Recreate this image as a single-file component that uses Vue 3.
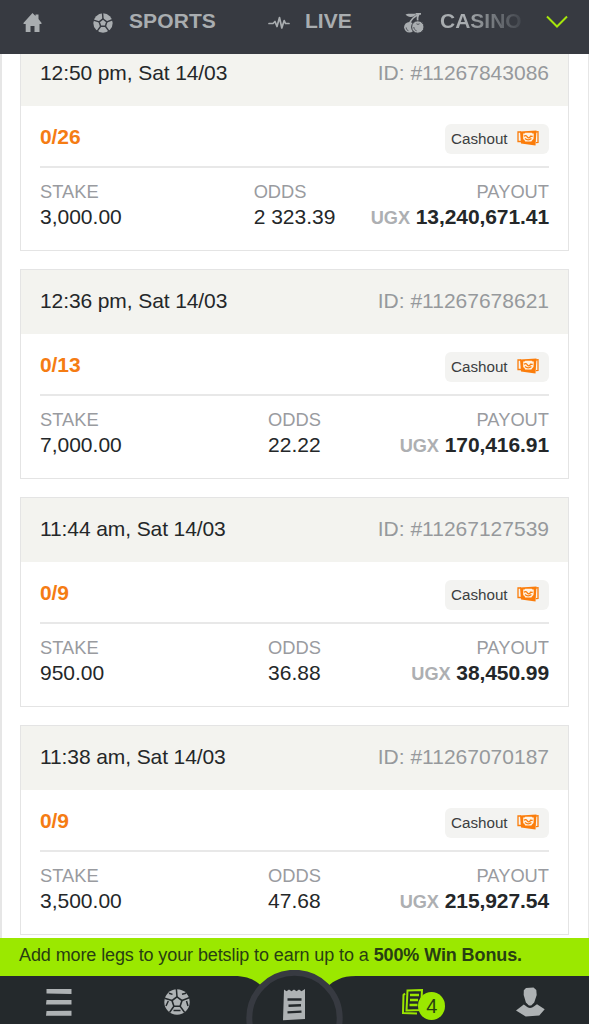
<script setup>
const bets = [
  { time: '12:50 pm, Sat 14/03', id: '11267843086', legs: '0/26', stake: '3,000.00', odds: '2 323.39', payout: '13,240,671.41' },
  { time: '12:36 pm, Sat 14/03', id: '11267678621', legs: '0/13', stake: '7,000.00', odds: '22.22', payout: '170,416.91' },
  { time: '11:44 am, Sat 14/03', id: '11267127539', legs: '0/9', stake: '950.00', odds: '36.88', payout: '38,450.99' },
  { time: '11:38 am, Sat 14/03', id: '11267070187', legs: '0/9', stake: '3,500.00', odds: '47.68', payout: '215,927.54' },
]
</script>

<template>
  <div class="screen">
    <header class="topbar">
      <svg class="home" width="19" height="20" viewBox="0 0 19 20"><path d="M9.5 0 12.5 3V1.5h3V6l3.3 4.2-.8.8h-1.5v8h-5v-6h-4v6H2.7v-8H1l-.8-.8Z" fill="#a9adb0" /></svg>
      <div class="tab sports">
        <svg width="20" height="20" viewBox="0 0 26 26">
          <circle cx="13" cy="13" r="12.6" fill="#a9adb0" />
          <path d="m13 7.8 5 3.7-1.9 5.8H9.9L8 11.5Z" fill="none" stroke="#373a41" stroke-width="1.9" />
          <path d="M13 7.8 12.4 0M18 11.5l7.2-2.7M16.1 17.3l4.6 6.2M9.9 17.3l-4.4 6.2M8 11.5.6 9.3" fill="none" stroke="#373a41" stroke-width="1.9" />
        </svg>
        <span>SPORTS</span>
      </div>
      <div class="tab live">
        <svg width="22" height="16" viewBox="0 0 22 16"><path d="M1 8.5h4l2-2 2 5 2.5-9 2.3 10.5 2.4-7.5 1.3 3H21" fill="none" stroke="#a9adb0" stroke-width="1.7" stroke-linecap="round" stroke-linejoin="round" /></svg>
        <span>LIVE</span>
      </div>
      <div class="tab casino">
        <svg width="20" height="22" viewBox="0 0 20 22">
          <path d="M1.5 2.6C4 .6 8 2.6 12.5 1.2 11 5.4 4.5 6.3 1.5 2.6ZM12 1h5v1.7h-5Z" fill="#a9adb0" />
          <path d="M15 2C10 5 7 7 5.5 12M15 2c-2 3-2 6-.5 9" fill="none" stroke="#a9adb0" stroke-width="1.7" />
          <circle cx="5.4" cy="15.2" r="5.3" fill="#a9adb0" />
          <circle cx="13.8" cy="15" r="6.2" fill="#a9adb0" stroke="#373a41" />
          <path d="M2.2 15.5c.2 2 1 2.8 2.2 3.2M9.8 15c.2 2 1.2 3.3 2.8 3.8M12.5 11.8c1 .7 2 .6 3 0" fill="none" stroke="#373a41" stroke-width=".8" />
        </svg>
        <span class="fade">CASINO</span>
      </div>
      <svg class="chevron" width="22" height="14" viewBox="0 0 22 14"><path d="m1 1.5 10 10 10-10" fill="none" stroke="#a6e60b" stroke-width="2" /></svg>
    </header>

    <main class="list">
      <article v-for="bet in bets" :key="bet.id" class="card">
        <div class="card-head"><span class="time">{{ bet.time }}</span><span class="id">ID: #{{ bet.id }}</span></div>
        <div class="card-body">
          <div class="status">
            <strong>{{ bet.legs }}</strong>
            <div class="cashout">
              <span>Cashout</span>
              <svg width="22" height="16" viewBox="0 0 22 16">
                <path d="M4 2H1v9.5h3M19 2l2-.3v10.8l-2 .2" fill="none" stroke="#fb7d0b" stroke-width="1.3" />
                <path d="M3 1.5 19.5.6l-1 14.8L4 13.6Z" fill="#fb7d0b" />
                <path d="M6.2 3.6h1.3l.8-.8h6.4l.9.7h1.2l-.3 5.6c-.8.3-1.2 1.7-2.2 2.3H8.2c-.4-1-1-1.8-2-2.2Z" fill="#fff3e3" />
                <path d="M7 6.3c1.4-1.2 2.4-.8 3.3.5s2.5 1.5 3.2-.6l2.2.2M8 8.6c1.7 1.5 4.6 1.6 6.4 0" fill="none" stroke="#fb7d0b" stroke-width="1.3" />
              </svg>
            </div>
          </div>
          <div class="figures">
            <div><label>STAKE</label><p>{{ bet.stake }}</p></div>
            <div><label>ODDS</label><p>{{ bet.odds }}</p></div>
            <div class="payout"><label>PAYOUT</label><p><small>UGX</small> <b>{{ bet.payout }}</b></p></div>
          </div>
        </div>
      </article>
    </main>

    <div class="promo"><span>Add more legs to your betslip to earn up to a <b>500% Win Bonus.</b></span></div>

    <nav class="bottom">
      <svg class="nav-shape" width="589" height="54" viewBox="0 0 589 54">
        <path d="M0 6h234c15 0 22 5 28 10h66c6-5 13-10 28-10h233v48H0Z" fill="#24292c" />
        <circle cx="294.5" cy="48" r="45.2" fill="#24292c" stroke="#373a41" stroke-width="6" />
      </svg>
      <div class="item"><svg width="26" height="27" viewBox="0 0 26 27"><path d="M.5 0h25v5l-25-.5ZM.5 11h25v4.5H0ZM.5 22l25-.2v5H0Z" fill="#aeb2b4" /></svg></div>
      <div class="item">
        <svg width="26" height="26" viewBox="0 0 26 26">
          <circle cx="13" cy="13" r="12.7" fill="#aeb2b4" />
          <path d="m13 7.8 5 3.7-1.9 5.8H9.9L8 11.5Z" fill="none" stroke="#24292c" stroke-width="1.6" />
          <path d="M13 7.8 12.4 0M18 11.5l7.2-2.7M16.1 17.3l4.6 6.2M9.9 17.3l-4.4 6.2M8 11.5.6 9.3M5 4.2l3.5 1.2M18 5.2l4-1M22.5 12l1.5 5M9.5 21.5h7M4.3 12 2 17" fill="none" stroke="#24292c" stroke-width="1.5" />
        </svg>
      </div>
      <div class="item slip">
        <svg width="23" height="32" viewBox="0 0 23 32">
          <path d="M1 .5 3.5 2.3 6 .5l2.5 1.8L11 .5l2.5 1.8L16 .5l2.5 1.8L22 0v30L0 31.2Z" fill="#aeb2b4" />
          <path d="M4.5 10.5h14M5.5 16.8l12.5-.6M4.5 23.4l14-.8" stroke="#24292c" stroke-width="2.4" />
        </svg>
      </div>
      <div class="item bets">
        <svg width="22" height="26" viewBox="0 0 22 26">
          <path d="M3 4.5 1.5 6 1 24l14 .5M5.5 1.5 20 1l-1 20-14.5.5Z" fill="none" stroke="#9be500" stroke-width="2" />
          <path d="M8 6h9M8 11h8M7.5 16h8" stroke="#9be500" stroke-width="2.4" />
        </svg>
        <span class="badge">4</span>
      </div>
      <div class="item person">
        <svg width="29" height="30" viewBox="0 0 29 30"><path d="M7.8 3.3 10 .9l7.5-.4L20.3 3l.4 5-2.5 7.5-3 3h-2.3l-3-3-2.2-7.5ZM0 23.5l7.8-5.9c2 1.2 3.2 3 6.2 3.5 3-.6 5-2.5 7-3.8l7.7 4.9-5.4 6.4-13.6 1Z" fill="#aeb2b4" /></svg>
      </div>
    </nav>
  </div>
</template>

<style>
body { margin: 0; background: #fff; }
</style>
<style scoped>
* { box-sizing: border-box; }
svg { display: block; flex: none; }
.screen { height: 1024px; display: flex; flex-direction: column; overflow: hidden; background: #fff; font-family: "Liberation Sans", Arial, sans-serif; font-size: 21px; color: #242729; }
.topbar { height: 54px; flex: none; display: flex; align-items: flex-start; padding: 13px 20px 0 23px; background: #373a41; color: #a9adb0; font-weight: bold; line-height: 16px; }
.tab { display: flex; align-items: flex-start; }
.sports { margin-left: 51px; width: 175px; gap: 16px; letter-spacing: .1px; }
.live { width: 136px; gap: 15px; }
.live svg { margin-top: 2px; }
.casino { width: 142px; gap: 16px; }
.casino svg { margin-top: -1px; }
.fade { background: linear-gradient(90deg, #a9adb0 30%, #41454c 100%); background-clip: text; color: transparent; height: 20px; }
.chevron { margin-top: 2px; }
.list { height: 884px; flex: none; display: flex; flex-direction: column; justify-content: flex-end; gap: 18px; padding: 0 18px 3px; border: solid #e6e6e6; border-width: 0 1px 0 2px; overflow: hidden; }
.card { height: 210px; flex: none; border: 1.5px solid #e4e4e4; background: #fff; width: 549px; }
.card-head { height: 64px; display: flex; justify-content: space-between; align-items: center; padding: 0 19px 3px; background: #f3f3ef; }
.time { letter-spacing: -.1px; }
.id { color: #96999c; }
.card-body { padding: 0 19px; }
.status { height: 62px; display: flex; justify-content: space-between; align-items: flex-start; padding-top: 18px; border-bottom: 2px solid #e8e8e8; }
.status strong { color: #f57c13; line-height: 25px; letter-spacing: -.1px; }
.cashout { width: 104px; height: 30px; display: flex; align-items: center; justify-content: space-between; padding: 0 10px 2px 6px; border-radius: 6px; background: #f3f3f1; color: #3b3e40; font-size: 15.2px; }
.figures { display: grid; grid-template-columns: 1fr auto 1fr; padding-top: 12px; }
label { display: block; font-size: 18.3px; line-height: 24px; color: #999ba0; }
p { margin: 0; line-height: 26px; white-space: nowrap; }
.payout { display: flex; flex-direction: column; align-items: flex-end; }
.payout p { letter-spacing: -.08px; }
small { font-size: 18.2px; font-weight: bold; color: #adafb2; }
.promo { height: 38px; flex: none; display: flex; align-items: center; padding: 0 19px 4px; background: #9be800; color: #283f12; font-size: 18px; letter-spacing: -.1px; white-space: nowrap; }
.bottom { height: 48px; flex: none; position: relative; display: grid; grid-template-columns: repeat(5, 1fr); background: #9be800; }
.nav-shape { position: absolute; left: 0; top: -6px; }
.item { position: relative; display: flex; justify-content: center; padding-top: 13px; }
.bets { justify-content: flex-start; padding-left: 49px; }
.badge { position: absolute; left: 65px; top: 16px; width: 27px; height: 28px; border-radius: 50%; background: #9be800; color: #283f12; text-align: center; line-height: 28px; font-size: 20px; }
.person { padding-top: 11px; }
</style>
